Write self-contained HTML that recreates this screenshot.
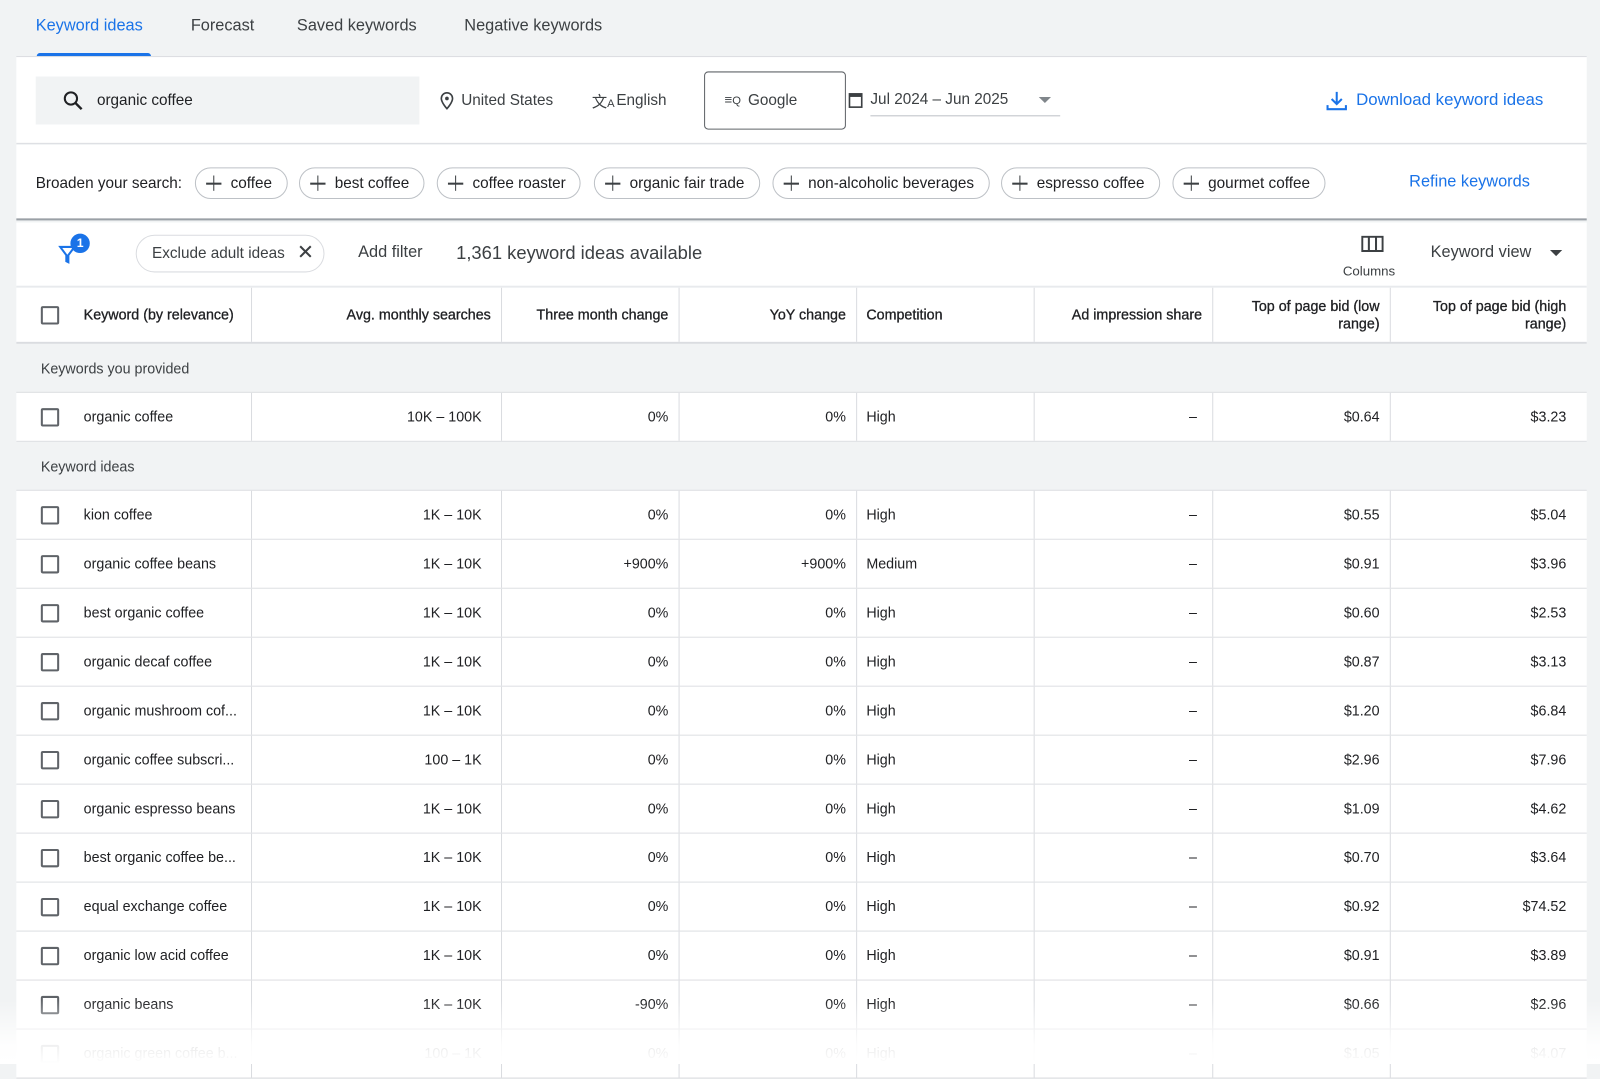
<!DOCTYPE html>
<html><head><meta charset="utf-8"><style>
*{box-sizing:border-box;margin:0;padding:0}
html,body{width:1600px;height:1064px;overflow:hidden;background:#f1f3f4}
#w{position:absolute;left:0;top:0;width:1568px;height:1043px;transform:scale(1.0204);transform-origin:0 0;font-family:"Liberation Sans",Arial,sans-serif;color:#202124}
.a{position:absolute;white-space:nowrap}
.tab{top:17px;font-size:16px;color:#3c4043}
.card{position:absolute;left:16px;width:1539px;background:#fff}
.chip{position:absolute;top:164px;height:31px;border:1px solid #bdc1c6;border-radius:16px;font-size:15px;line-height:29px;padding:0 14px 0 34px;color:#202124}
.chip:before{content:"";position:absolute;left:10px;top:14px;width:15px;height:1.6px;background:#3c4043}
.chip:after{content:"";position:absolute;left:16.7px;top:7px;width:1.6px;height:15px;background:#3c4043}
.row{position:absolute;left:16px;width:1539px;height:48px;border-bottom:1.5px solid #dadce0;background:#fff;font-size:14px}
.row div{position:absolute;top:0;line-height:47px;white-space:nowrap}
.vl{position:absolute;top:0;bottom:0;width:1.2px;background:#dadce0}
.cb{position:absolute;left:24px;top:15px;width:18px;height:18px;border:2px solid #5f6368;border-radius:2px}
.sec{position:absolute;left:16px;width:1539px;height:48px;background:#f1f3f4;border-bottom:1.5px solid #dadce0;font-size:14px;line-height:48px;padding-left:24px;color:#3c4043}
.r{text-align:right}
.hd div{color:#202124;-webkit-text-stroke:0.3px #202124}
</style></head><body><div id="w">
<div class="a tab" style="left:35px;color:#1a73e8">Keyword ideas</div>
<div class="a" style="left:36px;top:52px;width:112px;height:3px;background:#1a73e8;border-radius:3px 3px 0 0"></div>
<div class="a tab" style="left:187px">Forecast</div>
<div class="a tab" style="left:291px">Saved keywords</div>
<div class="a tab" style="left:455px">Negative keywords</div>
<div class="a" style="left:16px;top:55px;width:1539px;height:1px;background:#dadce0"></div>

<div class="card" style="top:56px;height:85px;border-bottom:1px solid #dadce0"></div>
<div class="a" style="left:35px;top:75px;width:376px;height:47px;background:#f1f3f4"></div>
<svg class="a" style="left:60px;top:87px" width="24" height="24" viewBox="0 0 24 24"><circle cx="9.5" cy="9.5" r="6" fill="none" stroke="#202124" stroke-width="2"/><path d="M14 14l6 6" stroke="#202124" stroke-width="2.4"/></svg>
<div class="a" style="left:95px;top:90px;font-size:15px">organic coffee</div>
<svg class="a" style="left:431px;top:90px" width="14" height="18" viewBox="0 0 14 18"><path d="M7 1C3.7 1 1.5 3.5 1.5 6.5 1.5 10.5 7 16.5 7 16.5S12.5 10.5 12.5 6.5C12.5 3.5 10.3 1 7 1z" fill="none" stroke="#3c4043" stroke-width="1.6"/><circle cx="7" cy="6.5" r="1.8" fill="#3c4043"/></svg>
<div class="a" style="left:452px;top:90px;font-size:15px;color:#3c4043">United States</div>
<div class="a" style="left:580px;top:89px;font-size:15px;color:#3c4043">文<span style="font-size:11px">A</span></div>
<div class="a" style="left:604px;top:90px;font-size:15px;color:#3c4043">English</div>
<div class="a" style="left:690px;top:70px;width:139px;height:57px;border:1px solid #5f6368;border-radius:4px"></div>
<div class="a" style="left:710px;top:90px;font-size:13px;color:#3c4043">≡<span style="font-size:11px">Q</span></div>
<div class="a" style="left:733px;top:90px;font-size:15px;color:#3c4043">Google</div>
<svg class="a" style="left:831px;top:89px" width="15" height="18" viewBox="0 0 15 18"><rect x="1.5" y="3" width="12" height="13" fill="none" stroke="#3c4043" stroke-width="1.6"/><rect x="1.5" y="3" width="12" height="3" fill="#3c4043"/></svg>
<div class="a" style="left:853px;top:89px;font-size:15px;color:#3c4043">Jul 2024 – Jun 2025</div>
<div class="a" style="left:1018px;top:95px;border-left:6px solid transparent;border-right:6px solid transparent;border-top:6px solid #80868b"></div>
<div class="a" style="left:853px;top:113px;width:186px;height:1px;background:#bdc1c6"></div>
<svg class="a" style="left:1299px;top:88px" width="22" height="22" viewBox="0 0 22 22"><path d="M11 2v12M6 9l5 5 5-5M2 15v4h18v-4" fill="none" stroke="#1a73e8" stroke-width="2"/></svg>
<div class="a" style="left:1329px;top:89px;font-size:16.5px;color:#1a73e8">Download keyword ideas</div>

<div class="card" style="top:142px;height:74px;border-bottom:2px solid #9aa0a6"></div>
<div class="a" style="left:35px;top:171px;font-size:15px">Broaden your search:</div>
<div class="chip" style="left:191px">coffee</div>
<div class="chip" style="left:293px">best coffee</div>
<div class="chip" style="left:428px">coffee roaster</div>
<div class="chip" style="left:582px">organic fair trade</div>
<div class="chip" style="left:757px">non-alcoholic beverages</div>
<div class="chip" style="left:981px">espresso coffee</div>
<div class="chip" style="left:1149px">gourmet coffee</div>
<div class="a" style="left:1381px;top:170px;font-size:16px;color:#1a73e8">Refine keywords</div>

<div class="card" style="top:218px;height:64px;border-bottom:2px solid #e8eaed"></div>
<svg class="a" style="left:57px;top:236px" width="20" height="24" viewBox="0 0 20 24"><path d="M2 6h14l-6 8v7l-2-1v-6z" fill="none" stroke="#1a73e8" stroke-width="2"/></svg>
<div class="a" style="left:69px;top:229px;width:19px;height:19px;border-radius:50%;background:#1a73e8;color:#fff;font-size:12px;font-weight:bold;text-align:center;line-height:19px">1</div>
<div class="a" style="left:133px;top:230px;width:185px;height:37px;border:1px solid #dadce0;border-radius:19px;font-size:15px;line-height:35px;padding-left:15px;color:#3c4043">Exclude adult ideas <span style="position:absolute;left:157px;font-size:20px;line-height:34px">✕</span></div>
<div class="a" style="left:351px;top:239px;font-size:16px;color:#3c4043">Add filter</div>
<div class="a" style="left:447px;top:238px;font-size:18px;color:#3c4043">1,361 keyword ideas available</div>
<svg class="a" style="left:1334px;top:231px" width="22" height="16" viewBox="0 0 22 16"><rect x="1" y="1" width="20" height="14" fill="none" stroke="#3c4043" stroke-width="2"/><path d="M7.5 1v14M14.5 1v14" stroke="#3c4043" stroke-width="2"/></svg>
<div class="a" style="left:1316px;top:258px;font-size:13px;color:#3c4043">Columns</div>
<div class="a" style="left:1402px;top:239px;font-size:16px;color:#3c4043">Keyword view</div>
<div class="a" style="left:1519px;top:245px;border-left:6px solid transparent;border-right:6px solid transparent;border-top:6px solid #3c4043"></div>

<div class="row hd" style="top:282px;height:55px;border-bottom:2px solid #dadce0;font-size:14px">
<span class="vl" style="left:230px"></span><span class="vl" style="left:475px"></span><span class="vl" style="left:649px"></span><span class="vl" style="left:823px"></span><span class="vl" style="left:997px"></span><span class="vl" style="left:1172px"></span><span class="vl" style="left:1346px"></span>
<span class="cb" style="top:18px"></span>
<div style="left:66px;line-height:53px">Keyword (by relevance)</div>
<div style="right:1074px;line-height:53px">Avg. monthly searches</div>
<div style="right:900px;line-height:53px">Three month change</div>
<div style="right:726px;line-height:53px">YoY change</div>
<div style="left:833px;line-height:53px">Competition</div>
<div style="right:377px;line-height:53px">Ad impression share</div>
<div class="r" style="right:203px;line-height:17px;top:10px">Top of page bid (low<br>range)</div>
<div class="r" style="right:20px;line-height:17px;top:10px">Top of page bid (high<br>range)</div>
</div>
<div class="sec" style="top:337px;height:48px">Keywords you provided</div>
<div id="rows"></div>
</div>
<div style="position:absolute;left:0;top:1000px;width:1600px;height:64px;background:linear-gradient(rgba(255,255,255,0),rgba(255,255,255,0.9) 70%,#fff)"></div>
<script>
var d=[["organic coffee","10K – 100K","0%","0%","High","$0.64","$3.23"],null,
["kion coffee","1K – 10K","0%","0%","High","$0.55","$5.04"],
["organic coffee beans","1K – 10K","+900%","+900%","Medium","$0.91","$3.96"],
["best organic coffee","1K – 10K","0%","0%","High","$0.60","$2.53"],
["organic decaf coffee","1K – 10K","0%","0%","High","$0.87","$3.13"],
["organic mushroom cof...","1K – 10K","0%","0%","High","$1.20","$6.84"],
["organic coffee subscri...","100 – 1K","0%","0%","High","$2.96","$7.96"],
["organic espresso beans","1K – 10K","0%","0%","High","$1.09","$4.62"],
["best organic coffee be...","1K – 10K","0%","0%","High","$0.70","$3.64"],
["equal exchange coffee","1K – 10K","0%","0%","High","$0.92","$74.52"],
["organic low acid coffee","1K – 10K","0%","0%","High","$0.91","$3.89"],
["organic beans","1K – 10K","-90%","0%","High","$0.66","$2.96"],
["organic green coffee b...","100 – 1K","0%","0%","High","$1.05","$4.07"]];
var h="",y=385;
d.forEach(function(r){
if(!r){h+='<div class="sec" style="top:'+y+'px">Keyword ideas</div>';y+=48;return;}
h+='<div class="row" style="top:'+y+'px"><span class="vl" style="left:230px"></span><span class="vl" style="left:475px"></span><span class="vl" style="left:649px"></span><span class="vl" style="left:823px"></span><span class="vl" style="left:997px"></span><span class="vl" style="left:1172px"></span><span class="vl" style="left:1346px"></span><span class="cb"></span>'+
'<div style="left:66px">'+r[0]+'</div><div style="right:1083px">'+r[1]+'</div><div style="right:900px">'+r[2]+'</div><div style="right:726px">'+r[3]+'</div><div style="left:833px">'+r[4]+'</div><div style="right:382px">–</div><div style="right:203px">'+r[5]+'</div><div style="right:20px">'+r[6]+'</div></div>';
y+=48;});
document.getElementById("rows").outerHTML=h;
</script>
</body></html>
